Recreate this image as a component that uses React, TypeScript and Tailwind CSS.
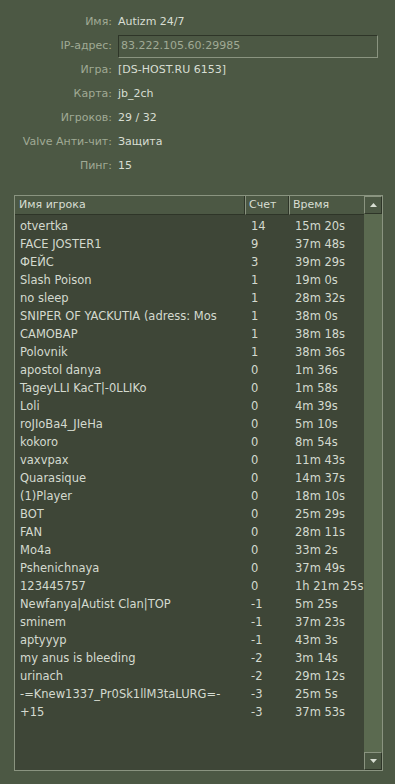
import React from 'react';

const info = [
  ['Имя', 'Autizm 24/7'],
  ['IP-адрес', '83.222.105.60:29985'],
  ['Игра', '[DS-HOST.RU 6153]'],
  ['Карта', 'jb_2ch'],
  ['Игроков', '29 / 32'],
  ['Valve Анти-чит', 'Защита'],
  ['Пинг', '15'],
];

const players: [string, string, string][] = [
  ['otvertka', '14', '15m 20s'],
  ['FACE JOSTER1', '9', '37m 48s'],
  ['ФЕЙС', '3', '39m 29s'],
  ['Slash Poison', '1', '19m 0s'],
  ['no sleep', '1', '28m 32s'],
  ['SNIPER OF YACKUTIA (adress: Mos', '1', '38m 0s'],
  ['CAMOBAP', '1', '38m 18s'],
  ['Polovnik', '1', '38m 36s'],
  ['apostol danya', '0', '1m 36s'],
  ['TageyLLI KacT|-0LLIKo', '0', '1m 58s'],
  ['Loli', '0', '4m 39s'],
  ['roJIoBa4_JIeHa', '0', '5m 10s'],
  ['kokoro', '0', '8m 54s'],
  ['vaxvpax', '0', '11m 43s'],
  ['Quarasique', '0', '14m 37s'],
  ['(1)Player', '0', '18m 10s'],
  ['BOT', '0', '25m 29s'],
  ['FAN', '0', '28m 11s'],
  ['Mo4a', '0', '33m 2s'],
  ['Pshenichnaya', '0', '37m 49s'],
  ['123445757', '0', '1h 21m 25s'],
  ['Newfanya|Autist Clan|TOP', '-1', '5m 25s'],
  ['sminem', '-1', '37m 23s'],
  ['aptyyyp', '-1', '43m 3s'],
  ['my anus is bleeding', '-2', '3m 14s'],
  ['urinach', '-2', '29m 12s'],
  ['-=Knew1337_Pr0Sk1llM3taLURG=-', '-3', '25m 5s'],
  ['+15', '-3', '37m 53s'],
];

export default function App() {
  return (
    <div
      className="w-[395px] h-[784px] bg-[#4c5844] overflow-hidden text-[11px]"
      style={{ fontFamily: '"DejaVu Sans", Verdana, sans-serif' }}
    >
      <div className="pt-[10px] flex flex-col">
        {info.map(([k, v], i) => (
          <div key={k} className="flex items-center h-[24px]">
            <div className="w-[112px] text-right text-[#a0aa95] whitespace-nowrap">{k}:</div>
            {i === 1 ? (
              <div className="ml-[6px] w-[260px] h-[23px] flex items-center px-[2px] border border-t-[#2e3528] border-l-[#2e3528] border-r-[#8a9480] border-b-[#8a9480] text-[#a0aa95]">
                {v}
              </div>
            ) : (
              <div className="ml-[6px] text-[#d8ded3] whitespace-nowrap">{v}</div>
            )}
          </div>
        ))}
      </div>

      <div className="mt-[17px] ml-[14px] w-[369px] h-[576px] border border-[#8a9480] bg-[#3e4637] flex">
        <div className="flex-1 flex flex-col min-w-0">
          <div className="flex h-[19px] bg-[#4c5844] text-[#d8ded3]">
            <div className="w-[230px] shrink-0 border-r border-b border-r-[#2e3528] border-b-[#2e3528] pl-[4px] flex items-center">Имя игрока</div>
            <div className="w-[44px] shrink-0 border-l border-r border-b border-l-[#8a9480] border-r-[#2e3528] border-b-[#2e3528] pl-[3px] flex items-center">Счет</div>
            <div className="flex-1 border-l border-b border-l-[#8a9480] border-b-[#2e3528] pl-[3px] flex items-center">Время</div>
          </div>
          <div className="pt-[3px] text-[#d4dacf] text-[11.5px]">
            {players.map(([n, s, t], i) => (
              <div key={i} className="flex h-[18px] items-center">
                <div className="w-[236px] shrink-0 pl-[5px] whitespace-nowrap overflow-hidden">{n}</div>
                <div className="w-[44px] shrink-0">{s}</div>
                <div className="flex-1 min-w-0 whitespace-nowrap">{t}</div>
              </div>
            ))}
          </div>
        </div>
        <div className="w-[18px] shrink-0 bg-[#5b6a50] flex flex-col justify-between">
          <div className="h-[18px] bg-[#4c5844] border border-t-[#8a9480] border-l-[#8a9480] border-r-[#2e3528] border-b-[#2e3528] flex items-center justify-center">
            <svg width="7" height="4" viewBox="0 0 7 4"><polygon points="3.5,0 7,4 0,4" fill="#d8ded3" /></svg>
          </div>
          <div className="h-[18px] bg-[#4c5844] border border-t-[#8a9480] border-l-[#8a9480] border-r-[#2e3528] border-b-[#2e3528] flex items-center justify-center">
            <svg width="7" height="4" viewBox="0 0 7 4"><polygon points="0,0 7,0 3.5,4" fill="#d8ded3" /></svg>
          </div>
        </div>
      </div>
    </div>
  );
}
